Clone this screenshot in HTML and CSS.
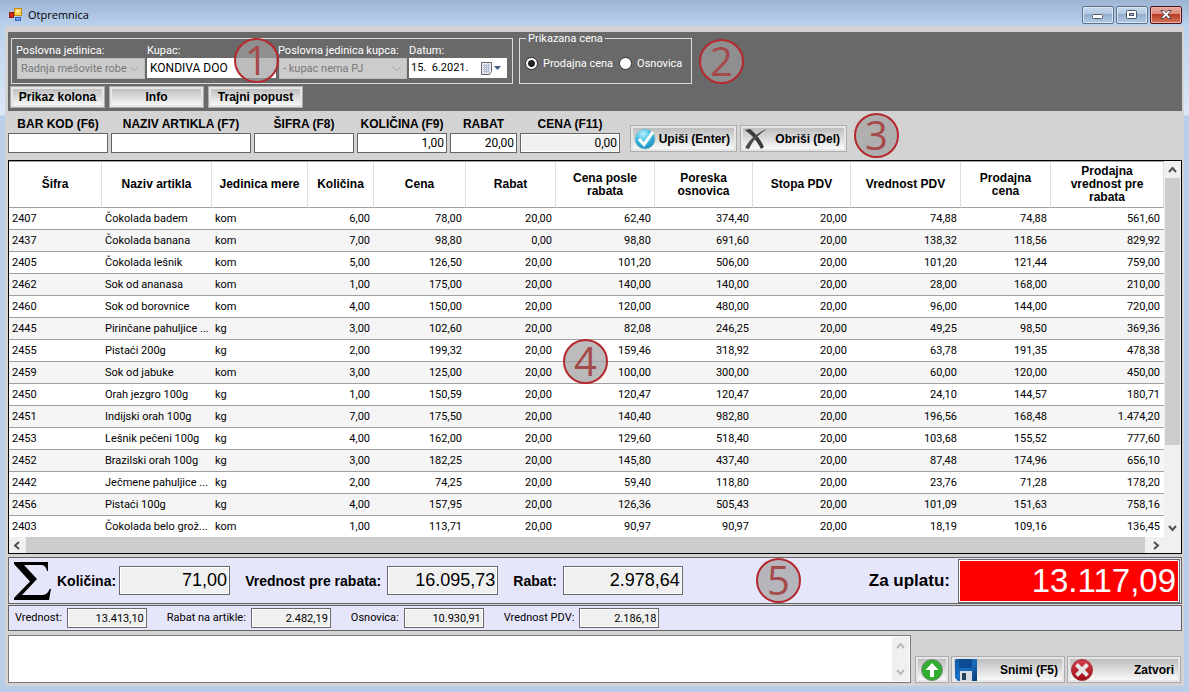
FILE: index.html
```
<!DOCTYPE html>
<html lang="sr-Latn">
<head>
    <meta charset="UTF-8">
    <meta name="viewport" content="width=device-width, initial-scale=1.0">
    <title>Otpremnica</title>
    <link rel="stylesheet" href="styles.css">
</head>
<body>
    <!-- Naslovna traka -->
    <header class="titlebar">
        <svg class="app-icon" width="14" height="14" viewBox="0 0 14 14">
            <rect x="0.5" y="4.5" width="4" height="5" fill="#d32a1c" stroke="#8f1710"/>
            <rect x="5.5" y="0.5" width="7" height="7" fill="#fbd65a" stroke="#c48a10"/>
            <rect x="7" y="2" width="3" height="2" fill="#fff3b8"/>
            <rect x="6.5" y="9.5" width="5" height="3" fill="#6f9df0" stroke="#3a62c4"/>
        </svg>
        <h1>Otpremnica</h1>
        <div class="win-buttons">
            <button type="button" aria-label="Umanji">
                <svg width="12" height="12" viewBox="0 0 12 12"><rect x="0.5" y="5.5" width="10" height="4" rx="1" fill="#fff" stroke="#55606e"/></svg>
            </button>
            <button type="button" aria-label="Uvećaj">
                <svg width="12" height="12" viewBox="0 0 12 12"><rect x="0.5" y="1.5" width="10" height="8" rx="1" fill="#fff" stroke="#4b5564"/><rect x="3.5" y="4.5" width="4" height="2" fill="#a9c0da" stroke="#4b5564"/></svg>
            </button>
            <button type="button" class="win-close" aria-label="Zatvori prozor">
                <svg width="12" height="12" viewBox="0 0 12 12"><path d="M0.8 1.5H4L6 3.8 8 1.5h3.2L7.9 5.5l3.3 4H8L6 7.2 4 9.5H0.8l3.3-4z" fill="#fff" stroke="#5a4a55"/></svg>
            </button>
        </div>
    </header>

    <main class="window">
        <!-- Zaglavlje otpremnice -->
        <section class="top-panel">
            <div class="groups">
                <div class="group">
                    <div class="field">
                        <label for="pj">Poslovna jedinica:</label>
                        <div class="combo">
                            <select id="pj" disabled><option>Radnja mešovite robe</option></select>
                            <svg width="9" height="6" viewBox="0 0 9 6"><path d="M0.5 0.5l4 4 4-4" fill="none" stroke="#a0a0a0"/></svg>
                        </div>
                    </div>
                    <div class="field">
                        <label for="kupac">Kupac:</label>
                        <input class="kupac" id="kupac" type="text" value="KONDIVA DOO">
                    </div>
                    <div class="field">
                        <label for="pjKupca">Poslovna jedinica kupca:</label>
                        <div class="combo">
                            <select id="pjKupca" disabled><option>- kupac nema PJ</option></select>
                            <svg width="9" height="6" viewBox="0 0 9 6"><path d="M0.5 0.5l4 4 4-4" fill="none" stroke="#a0a0a0"/></svg>
                        </div>
                    </div>
                    <div class="field field-date">
                        <label for="datum">Datum:</label>
                        <div class="date-box">
                            <input id="datum" type="text" value="15.  6.2021.">
                            <button type="button" aria-label="Izaberi datum">
                                <svg width="21" height="13" viewBox="0 0 21 13">
                                    <path d="M0.5 0.5h10v9l-2 3h-8z" fill="#e9edf4" stroke="#6b6470"/>
                                    <path d="M2 3.5h7M2 5.5h7M2 7.5h7M2 9.5h6M3.5 2v9M5.5 2v9M7.5 2v9" stroke="#b4bed0" fill="none"/>
                                    <path d="M13 4h7l-3.5 4z" fill="#3f5a86"/>
                                </svg>
                            </button>
                        </div>
                    </div>
                </div>
                <fieldset class="price-group">
                    <legend>Prikazana cena</legend>
                    <label><input type="radio" name="cena" checked>Prodajna cena</label>
                    <label><input type="radio" name="cena">Osnovica</label>
                </fieldset>
            </div>
            <div class="tool-buttons">
                <button type="button">Prikaz kolona</button>
                <button type="button">Info</button>
                <button type="button">Trajni popust</button>
            </div>
        </section>

        <!-- Unos artikla -->
        <section class="entry">
            <div class="entry-field w100"><label for="barkod">BAR KOD (F6)</label><input id="barkod" type="text"></div>
            <div class="entry-field w140"><label for="naziv">NAZIV ARTIKLA (F7)</label><input id="naziv" type="text"></div>
            <div class="entry-field w100"><label for="sifra">ŠIFRA (F8)</label><input id="sifra" type="text"></div>
            <div class="entry-field w90"><label for="kolicina">KOLIČINA (F9)</label><input id="kolicina" type="text" value="1,00"></div>
            <div class="entry-field w67"><label for="rabat">RABAT</label><input id="rabat" type="text" value="20,00"></div>
            <div class="entry-field w100"><label for="cena">CENA (F11)</label><input id="cena" type="text" value="0,00" readonly></div>
            <div class="entry-buttons">
                <button type="button" class="big-button">
                    <svg width="22" height="22" viewBox="0 0 22 22">
                        <defs>
                            <radialGradient id="plava" cx="0.4" cy="0.25" r="0.8"><stop offset="0" stop-color="#b9effb"/><stop offset="0.5" stop-color="#3dbbe0"/><stop offset="1" stop-color="#1486b8"/></radialGradient>
                        </defs>
                        <circle cx="11" cy="11" r="10" fill="url(#plava)" stroke="#8fbccc"/>
                        <path d="M5 11l5 5.500L19 4" fill="none" stroke="#fff" stroke-width="3"/>
                    </svg>
                    <span>Upiši (Enter)</span>
                </button>
                <button type="button" class="big-button">
                    <svg width="24" height="22" viewBox="0 0 24 22">
                        <path d="M1 2l5-1c5 4 10 9 14 18l-3 2C13 13 8 7 1 2z" fill="#3a3a3a"/>
                        <path d="M23 1C15 6 9 12 5 21l-4-1C6 11 13 5 23 1z" fill="#4a4a4a"/>
                    </svg>
                    <span>Obriši (Del)</span>
                </button>
            </div>
        </section>

        <!-- Stavke -->
        <section class="grid">
            <div class="grid-body">
                <table>
                    <thead>
                        <tr>
                            <th class="c93">Šifra</th>
                            <th class="c110">Naziv artikla</th>
                            <th class="c96">Jedinica mere</th>
                            <th class="c66">Količina</th>
                            <th class="c92">Cena</th>
                            <th class="c90">Rabat</th>
                            <th class="c99">Cena posle rabata</th>
                            <th class="c98">Poreska osnovica</th>
                            <th class="c98">Stopa PDV</th>
                            <th class="c110">Vrednost PDV</th>
                            <th class="c90">Prodajna cena</th>
                            <th class="c113">Prodajna vrednost pre rabata</th>
                        </tr>
                    </thead>
                    <tbody>
                        <tr><td>2407</td><td>Čokolada badem</td><td>kom</td><td>6,00</td><td>78,00</td><td>20,00</td><td>62,40</td><td>374,40</td><td>20,00</td><td>74,88</td><td>74,88</td><td>561,60</td></tr>
                        <tr><td>2437</td><td>Čokolada banana</td><td>kom</td><td>7,00</td><td>98,80</td><td>0,00</td><td>98,80</td><td>691,60</td><td>20,00</td><td>138,32</td><td>118,56</td><td>829,92</td></tr>
                        <tr><td>2405</td><td>Čokolada lešnik</td><td>kom</td><td>5,00</td><td>126,50</td><td>20,00</td><td>101,20</td><td>506,00</td><td>20,00</td><td>101,20</td><td>121,44</td><td>759,00</td></tr>
                        <tr><td>2462</td><td>Sok od ananasa</td><td>kom</td><td>1,00</td><td>175,00</td><td>20,00</td><td>140,00</td><td>140,00</td><td>20,00</td><td>28,00</td><td>168,00</td><td>210,00</td></tr>
                        <tr><td>2460</td><td>Sok od borovnice</td><td>kom</td><td>4,00</td><td>150,00</td><td>20,00</td><td>120,00</td><td>480,00</td><td>20,00</td><td>96,00</td><td>144,00</td><td>720,00</td></tr>
                        <tr><td>2445</td><td>Pirinčane pahuljice ...</td><td>kg</td><td>3,00</td><td>102,60</td><td>20,00</td><td>82,08</td><td>246,25</td><td>20,00</td><td>49,25</td><td>98,50</td><td>369,36</td></tr>
                        <tr><td>2455</td><td>Pistaći 200g</td><td>kg</td><td>2,00</td><td>199,32</td><td>20,00</td><td>159,46</td><td>318,92</td><td>20,00</td><td>63,78</td><td>191,35</td><td>478,38</td></tr>
                        <tr><td>2459</td><td>Sok od jabuke</td><td>kom</td><td>3,00</td><td>125,00</td><td>20,00</td><td>100,00</td><td>300,00</td><td>20,00</td><td>60,00</td><td>120,00</td><td>450,00</td></tr>
                        <tr><td>2450</td><td>Orah jezgro 100g</td><td>kg</td><td>1,00</td><td>150,59</td><td>20,00</td><td>120,47</td><td>120,47</td><td>20,00</td><td>24,10</td><td>144,57</td><td>180,71</td></tr>
                        <tr><td>2451</td><td>Indijski orah 100g</td><td>kg</td><td>7,00</td><td>175,50</td><td>20,00</td><td>140,40</td><td>982,80</td><td>20,00</td><td>196,56</td><td>168,48</td><td>1.474,20</td></tr>
                        <tr><td>2453</td><td>Lešnik pečeni 100g</td><td>kg</td><td>4,00</td><td>162,00</td><td>20,00</td><td>129,60</td><td>518,40</td><td>20,00</td><td>103,68</td><td>155,52</td><td>777,60</td></tr>
                        <tr><td>2452</td><td>Brazilski orah 100g</td><td>kg</td><td>3,00</td><td>182,25</td><td>20,00</td><td>145,80</td><td>437,40</td><td>20,00</td><td>87,48</td><td>174,96</td><td>656,10</td></tr>
                        <tr><td>2442</td><td>Ječmene pahuljice ...</td><td>kg</td><td>2,00</td><td>74,25</td><td>20,00</td><td>59,40</td><td>118,80</td><td>20,00</td><td>23,76</td><td>71,28</td><td>178,20</td></tr>
                        <tr><td>2456</td><td>Pistaći 100g</td><td>kg</td><td>4,00</td><td>157,95</td><td>20,00</td><td>126,36</td><td>505,43</td><td>20,00</td><td>101,09</td><td>151,63</td><td>758,16</td></tr>
                        <tr><td>2403</td><td>Čokolada belo grož...</td><td>kom</td><td>1,00</td><td>113,71</td><td>20,00</td><td>90,97</td><td>90,97</td><td>20,00</td><td>18,19</td><td>109,16</td><td>136,45</td></tr>
                    </tbody>
                </table>
            </div>
            <div class="scroll scroll-v">
                <svg width="9" height="17" viewBox="0 0 9 17"><path d="M1 11l3.500-4L8 11" fill="none" stroke="#505050" stroke-width="2"/></svg>
                <div class="thumb-v"></div>
                <svg class="scroll-end" width="9" height="17" viewBox="0 0 9 17"><path d="M1 6l3.500 4L8 6" fill="none" stroke="#505050" stroke-width="2"/></svg>
            </div>
            <div class="scroll scroll-h">
                <svg width="17" height="9" viewBox="0 0 17 9"><path d="M10 1L6 4.500 10 8" fill="none" stroke="#505050" stroke-width="2"/></svg>
                <div class="thumb-h"></div>
                <svg width="19" height="9" viewBox="0 0 19 9"><path d="M9 1l4 3.500L9 8" fill="none" stroke="#505050" stroke-width="2"/></svg>
            </div>
        </section>

        <!-- Zbirni podaci -->
        <section class="totals">
            <svg class="sigma" width="37" height="38" viewBox="0 0 37 38">
                <path d="M0 0H34V9H33C32 4 30 3 26 3H10L23 17 8 33H27C32 33 34 31 35.500 27H37L35 38H0V36L16 19.500 0 2z"/>
            </svg>
            <label for="uKolicina">Količina:</label>
            <input class="w111" id="uKolicina" type="text" value="71,00" readonly>
            <label for="uPreRabata">Vrednost pre rabata:</label>
            <input class="w111" id="uPreRabata" type="text" value="16.095,73" readonly>
            <label for="uRabat">Rabat:</label>
            <input class="w120" id="uRabat" type="text" value="2.978,64" readonly>
            <label class="pay-label" for="zaUplatu">Za uplatu:</label>
            <input class="pay" id="zaUplatu" type="text" value="13.117,09" readonly>
        </section>
        <section class="subtotals">
            <label for="vrednost">Vrednost:</label>
            <input id="vrednost" type="text" value="13.413,10" readonly>
            <label for="rabatArtikli">Rabat na artikle:</label>
            <input id="rabatArtikli" type="text" value="2.482,19" readonly>
            <label for="osnovica">Osnovica:</label>
            <input id="osnovica" type="text" value="10.930,91" readonly>
            <label for="vrednostPdv">Vrednost PDV:</label>
            <input id="vrednostPdv" type="text" value="2.186,18" readonly>
        </section>

        <!-- Napomena i komande -->
        <section class="bottom">
            <div class="note">
                <textarea aria-label="Napomena"></textarea>
                <div class="note-scroll">
                    <svg width="9" height="17" viewBox="0 0 9 17"><path d="M1 11l3.500-4L8 11" fill="none" stroke="#bababa" stroke-width="2"/></svg>
                    <svg width="9" height="17" viewBox="0 0 9 17"><path d="M1 6l3.500 4L8 6" fill="none" stroke="#bababa" stroke-width="2"/></svg>
                </div>
            </div>
            <div class="bottom-buttons">
                <button type="button" class="big-button icon-only" aria-label="Pošalji">
                    <svg width="24" height="22" viewBox="0 0 24 22">
                        <circle cx="12" cy="11" r="10.500" fill="#2fae2f" stroke="#7a8a7a"/>
                        <path d="M12 4l6.500 7H14v7h-4v-7H5.500z" fill="#fff"/>
                    </svg>
                </button>
                <button type="button" class="big-button">
                    <svg width="22" height="22" viewBox="0 0 22 22">
                        <defs>
                            <linearGradient id="disk" x1="0" y1="0" x2="1" y2="1"><stop offset="0" stop-color="#0f5aa8"/><stop offset="0.500" stop-color="#1c6fc0"/><stop offset="1" stop-color="#0a3a78"/></linearGradient>
                        </defs>
                        <path d="M0 1.500Q0 0 1.500 0H22v22H3L0 19z" fill="url(#disk)"/>
                        <rect x="4" y="0" width="13" height="9" fill="#0c4c94"/>
                        <rect x="5" y="12" width="12" height="10" fill="#d9dde2"/>
                        <rect x="7" y="14" width="4" height="7" fill="#24405f"/>
                    </svg>
                    <span>Snimi (F5)</span>
                </button>
                <button type="button" class="big-button">
                    <svg width="22" height="22" viewBox="0 0 22 22">
                        <defs>
                            <linearGradient id="crvena" x1="0" y1="0" x2="0" y2="1"><stop offset="0" stop-color="#d04048"/><stop offset="1" stop-color="#a00c14"/></linearGradient>
                        </defs>
                        <circle cx="11" cy="11" r="10.500" fill="url(#crvena)" stroke="#a83038"/>
                        <path d="M5.500 5.500l11 11M16.500 5.500l-11 11" stroke="#e6e6e6" stroke-width="4"/>
                    </svg>
                    <span>Zatvori</span>
                </button>
            </div>
        </section>
    </main>

    <!-- Oznake delova forme -->
    <span class="mark mark-1">1</span>
    <span class="mark mark-2">2</span>
    <span class="mark mark-3">3</span>
    <span class="mark mark-4">4</span>
    <span class="mark mark-5">5</span>
</body>
</html>
```
FILE: styles.css
```
* {
    box-sizing: border-box;
}
body {
    margin: 0;
    min-height: 100vh;
    display: flex;
    flex-direction: column;
    padding: 0 5px 6px 5px;
    background: linear-gradient(#9db5d3, #bad2ee 26px, #dce8f6 115px, #b9cfe9 116px);
    font: 11px/14px Roboto, "Liberation Sans", sans-serif;
    color: #000;
}
input, button, select, textarea {
    font: inherit;
    color: inherit;
    margin: 0;
    border-radius: 0;
    outline: none;
}
svg {
    display: block;
    flex: none;
}

/* Naslovna traka */
.titlebar {
    display: flex;
    align-items: center;
    height: 26px;
    padding: 3px 2px 0 4px;
}
.titlebar h1 {
    margin: 0 0 0 5px;
    font: 11px/14px "Open Sans", "Noto Sans", sans-serif;
}
.win-buttons {
    display: flex;
    gap: 2px;
    margin-left: auto;
}
.win-buttons button {
    display: flex;
    align-items: center;
    justify-content: center;
    width: 32px;
    height: 18px;
    padding: 0;
    border: 1px solid #5f728c;
    border-radius: 2px;
    background: linear-gradient(#c6d8eb, #b4cae2 45%, #92adca 46%, #b3cce8);
    box-shadow: inset 0 0 0 1px #d9e6f4;
}
.win-buttons .win-close {
    border-color: #4e1218;
    background: linear-gradient(#e8a79c, #d98a7c 45%, #b83a22 46%, #d4775c);
    box-shadow: inset 0 0 0 1px #e9b5a8;
}

.window {
    flex: 1;
    display: flex;
    flex-direction: column;
    padding: 6px 2px 3px 3px;
    background: #d3d3d3;
}

/* Zaglavlje */
.top-panel {
    height: 79px;
    padding: 6px 2px 0;
    background: #696969;
    color: #fff;
}
.groups {
    display: flex;
    gap: 6px;
    padding-left: 1px;
}
.group {
    display: flex;
    gap: 2px;
    height: 46px;
    padding: 5px 5px 0 4px;
    border: 1px solid #dcdcdc;
}
.field {
    display: flex;
    flex-direction: column;
    width: 129px;
}
.field-date {
    width: 98px;
}
.field label {
    white-space: nowrap;
}
.combo {
    display: flex;
    align-items: center;
    height: 21px;
    margin-left: 1px;
    padding-right: 5px;
    border: 1px solid #bfbfbf;
    background: #cccccc;
}
.combo select {
    flex: 1;
    min-width: 0;
    padding: 0 3px;
    border: 0;
    appearance: none;
    background: none;
    color: #787878;
    opacity: 1;
}
.field .kupac {
    height: 20px;
    padding: 0 2px;
    border: 1px solid #fff;
    background: #fff;
    color: #000;
    font-size: 12px;
}
.date-box {
    display: flex;
    align-items: center;
    height: 20px;
    padding-right: 5px;
    background: #fff;
    color: #000;
}
.date-box input {
    flex: 1;
    min-width: 0;
    padding: 0 2px;
    border: 0;
    background: none;
    white-space: pre;
}
.date-box button {
    padding: 0;
    border: 0;
    background: none;
}
.price-group {
    position: relative;
    display: flex;
    align-items: center;
    gap: 6px;
    width: 173px;
    height: 46px;
    margin: 0;
    padding: 5px 5px 0;
    border: 1px solid #dcdcdc;
}
.price-group legend {
    position: absolute;
    top: -7px;
    left: 6px;
    padding: 0 2px;
    background: #696969;
}
.price-group label {
    display: flex;
    align-items: center;
    gap: 5px;
    white-space: nowrap;
}
.price-group input {
    width: 13px;
    height: 13px;
    border: 1px solid #333;
    border-radius: 50%;
    appearance: none;
    background: #fff;
}
.price-group input:checked {
    background: radial-gradient(circle, #222 0 3px, #fff 4px);
}
.tool-buttons {
    display: flex;
    gap: 4px;
    margin-top: 2px;
}
.tool-buttons button,
.big-button {
    border: 1px solid #adadad;
    background: linear-gradient(#b8b8b8, #fff);
    box-shadow: inset 0 0 0 2px #e6e6e6;
    color: #000;
    font: bold 12px/14px "Liberation Sans", Arial, sans-serif;
    white-space: nowrap;
}
.tool-buttons button {
    width: 95px;
    height: 22px;
    padding: 0;
}

/* Unos artikla */
.entry {
    display: flex;
    gap: 3px;
    padding: 6px 0 7px;
}
.entry-field {
    display: flex;
    flex-direction: column;
    gap: 2px;
}
.entry-field label {
    font: bold 12px/14px "Liberation Sans", Arial, sans-serif;
    text-align: center;
    white-space: nowrap;
}
.entry-field input {
    width: 100%;
    height: 20px;
    padding: 0 2px;
    border: 1px solid #646464;
    background: #fff;
    font-size: 12px;
    text-align: right;
}
.entry-field input:read-only {
    background: #f0f0f0;
    box-shadow: inset 0 0 0 1px #fff;
}
.w100 { width: 100px; }
.w140 { width: 140px; }
.w90 { width: 90px; }
.w67 { width: 67px; }
.entry-buttons {
    display: flex;
    align-items: flex-end;
    gap: 3px;
    padding: 0 0 1px 7px;
}
.big-button {
    display: flex;
    align-items: center;
    justify-content: space-between;
    width: 107px;
    height: 27px;
    padding: 0 6px 0 3px;
}

/* Tabela stavki */
.grid {
    flex: 1 1 0;
    min-height: 0;
    display: grid;
    grid-template-columns: 1fr 17px;
    grid-template-rows: 1fr 16px;
    border: 1px solid #000;
    background: #f0f0f0;
}
.grid-body {
    height: 0;
    min-height: 100%;
    overflow: hidden;
    border-top: 1px solid #a0a0a0;
    background: #fff;
}
table {
    width: 100%;
    border-collapse: separate;
    border-spacing: 0;
    table-layout: fixed;
}
th {
    height: 46px;
    padding: 0 12px;
    border-right: 1px solid #e0e0e0;
    border-bottom: 1px solid #a0a0a0;
    font: bold 12px/13px "Liberation Sans", Arial, sans-serif;
}
th:nth-child(3), th:nth-child(4), th:nth-child(12) {
    padding: 0 4px;
}
td {
    height: 22px;
    padding: 1px 4px 0;
    border-bottom: 1px solid #a0a0a0;
    text-align: right;
    white-space: nowrap;
}
td:nth-child(-n+3) {
    padding: 1px 2px 0 3px;
    text-align: left;
}
tbody tr:nth-child(even) {
    background: #f5f5f5;
}
.c66 { width: 66px; }
.c90 { width: 90px; }
.c92 { width: 92px; }
.c93 { width: 93px; }
.c96 { width: 96px; }
.c98 { width: 98px; }
.c99 { width: 99px; }
.c110 { width: 110px; }
.c113 { width: 113px; }
.scroll {
    display: flex;
    align-items: center;
}
.scroll-v {
    flex-direction: column;
}
.scroll-end {
    margin-top: auto;
}
.thumb-v {
    width: 15px;
    height: 71%;
    background: #cdcdcd;
}
.scroll-h {
    grid-column: 1;
}
.thumb-h {
    flex: 1;
    height: 100%;
    background: #cdcdcd;
}

/* Zbirni podaci */
.totals,
.subtotals {
    display: flex;
    align-items: center;
    border: 1px solid #646464;
    background: #e6e6fa;
    white-space: nowrap;
}
.totals {
    height: 47px;
    margin-top: 3px;
    padding: 0 1px 0 5px;
    font: bold 14px/18px "Liberation Sans", Arial, sans-serif;
}
.totals label {
    margin: 0 6px 0 15px;
}
.totals .sigma + label {
    margin: 0 3px 0 6px;
}
.totals input {
    height: 29px;
    padding: 0 2px;
    border: 1px solid #696969;
    background: #f0f0f0;
    box-shadow: inset 0 0 0 1px #fff;
    font: 18px/24px "Liberation Sans", Arial, sans-serif;
    text-align: right;
}
.totals .w111 { width: 111px; }
.totals .w120 { width: 120px; }
.totals .pay-label {
    margin: 0 8px 0 auto;
    font-size: 17px;
}
.totals .pay {
    width: 222px;
    height: 44px;
    padding: 0 3px;
    background: #f00;
    color: #fff;
    font-size: 33px;
    line-height: 38px;
}
.subtotals {
    height: 26px;
    margin-top: 1px;
    padding-left: 6px;
}
.subtotals label {
    margin: 0 5px 0 20px;
}
.subtotals label:first-child {
    margin-left: 0;
}
.subtotals input {
    width: 80px;
    height: 20px;
    padding: 0 2px;
    border: 1px solid #696969;
    background: #f0f0f0;
    box-shadow: inset 0 0 0 1px #fff;
    text-align: right;
}

/* Napomena i komande */
.bottom {
    display: flex;
    align-items: flex-end;
    gap: 4px;
    margin-top: 4px;
}
.note {
    flex: 1;
    display: flex;
    height: 48px;
    padding: 1px;
    border: 1px solid #7a7a7a;
    background: #fff;
}
.note textarea {
    flex: 1;
    border: 0;
    resize: none;
    overflow: hidden;
}
.note-scroll {
    display: flex;
    flex-direction: column;
    justify-content: space-between;
    align-items: center;
    width: 17px;
    background: #f0f0f0;
}
.bottom-buttons {
    display: flex;
    gap: 2px;
    padding-right: 1px;
}
.bottom-buttons .big-button {
    width: 114px;
}
.bottom-buttons .icon-only {
    width: 34px;
    justify-content: center;
    padding: 0;
}

/* Oznake */
.mark {
    position: absolute;
    width: 45px;
    height: 45px;
    border: 2px solid #b5282c;
    border-radius: 50%;
    background: rgba(160, 160, 160, 0.7);
    color: #a54a4a;
    font: 40px/40px "Open Sans", "Noto Sans", sans-serif;
    text-align: center;
}
.mark-1 { left: 234px; top: 38px; }
.mark-2 { left: 699px; top: 39px; }
.mark-3 { left: 854px; top: 113px; }
.mark-4 { left: 563px; top: 339px; }
.mark-5 { left: 756px; top: 558px; }
```
